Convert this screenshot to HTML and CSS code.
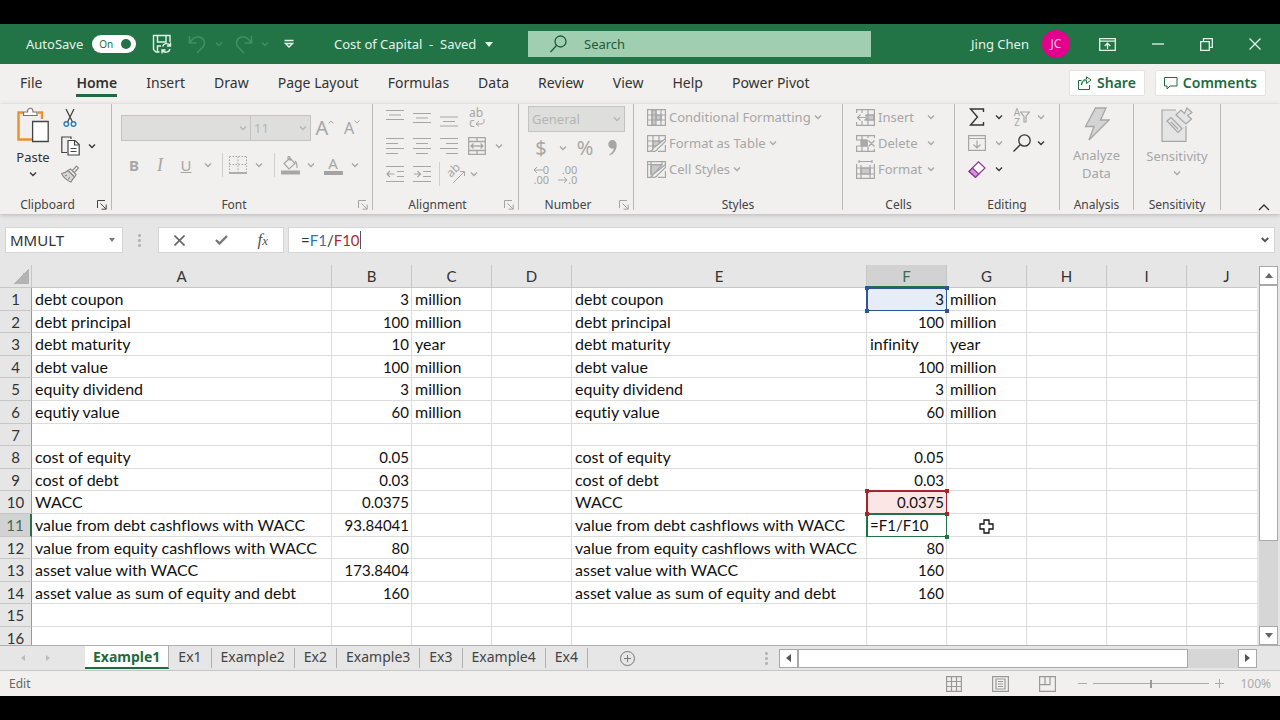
FILE: index.html
```
<!DOCTYPE html>
<html lang="en">
<head>
    <meta charset="UTF-8">
    <meta name="viewport" content="width=device-width, initial-scale=1.0">
    <title>Cost of Capital</title>
    <link rel="stylesheet" href="styles.css">
</head>
<body>
    <!-- shared icons -->
    <svg class="sprite" aria-hidden="true">
        <symbol id="chev" viewBox="0 0 8 6"><path d="M1 1.5l3 3 3-3" fill="none" stroke="currentColor" stroke-width="1.3"/></symbol>
        <symbol id="launch" viewBox="0 0 10 10"><path d="M.5 8V.5H8M3.5 3.5L9 9M9.2 4.5v4.7H4.5" fill="none" stroke="currentColor"/></symbol>
    </svg>

    <div class="app">
        <header class="titlebar">
            <label class="autosave">AutoSave
                <input type="checkbox" class="switch-input" checked>
                <span class="switch">On</span>
            </label>
            <div class="quick">
                <button class="icon-btn" aria-label="Save"><svg width="20" height="20" viewBox="0 0 20 20" fill="none" stroke="currentColor" stroke-width="1.4"><path d="M7.500 18H4L1.500 15.500V1.500H18V8M5.500 2v6H14V2M5.500 18v-6H9"/><path d="M10.500 12.500a4.200 4.200 0 0 1 7.500-1M18.500 8.500v3.500H15M18 15a4.200 4.200 0 0 1-7.500 1.500M10 19.500V16h3.500"/></svg></button>
                <button class="icon-btn faded" disabled aria-label="Undo"><svg width="18" height="20" viewBox="0 0 18 20" fill="none" stroke="currentColor" stroke-width="1.6"><path d="M1.500 2v7h7M2 8.500C5 4 9 1.500 13 3.500s5 7 1 10.500L9 19"/></svg></button>
                <button class="icon-btn faded small" disabled aria-label="Undo list"><svg width="8" height="6"><use href="#chev"/></svg></button>
                <button class="icon-btn faded" disabled aria-label="Redo"><svg width="18" height="20" viewBox="0 0 18 20" fill="none" stroke="currentColor" stroke-width="1.6"><path d="M16.500 2v7h-7M16 8.500C13 4 9 1.500 5 3.500s-5 7-1 10.500L9 19"/></svg></button>
                <button class="icon-btn faded small" disabled aria-label="Redo list"><svg width="8" height="6"><use href="#chev"/></svg></button>
                <button class="icon-btn" aria-label="Customize toolbar"><svg width="10" height="10" viewBox="0 0 10 10" fill="none" stroke="currentColor" stroke-width="1.4"><path d="M0.500 1.500h9M1.500 4.500L5 8l3.500-3.500z"/></svg></button>
            </div>
            <button class="doc-name">Cost of Capital&nbsp; - &nbsp;Saved <svg width="8" height="5" viewBox="0 0 8 5"><path d="M0 0h8L4 5z" fill="currentColor"/></svg></button>
            <div class="search">
                <svg width="17" height="18" viewBox="0 0 17 18" fill="none" stroke="currentColor" stroke-width="1.3"><circle cx="10.500" cy="6.500" r="5.500"/><path d="M6.500 10.500L.5 17"/></svg>
                <input type="search" placeholder="Search" aria-label="Search">
            </div>
            <div class="account">
                <span>Jing Chen</span>
                <span class="avatar">JC</span>
            </div>
            <div class="window-buttons">
                <button class="icon-btn" aria-label="Ribbon display options"><svg width="17" height="13" viewBox="0 0 17 13" fill="none" stroke="currentColor" stroke-width="1.300"><path d="M.7.7h15.600v11.600H.7zM.7 3.200h15.600M8.500 11V5.500M5.700 8l2.800-2.800L11.300 8"/></svg></button>
                <button class="icon-btn" aria-label="Minimize"><svg width="12" height="12" viewBox="0 0 12 12" stroke="currentColor" stroke-width="1.300"><path d="M0 6h12"/></svg></button>
                <button class="icon-btn" aria-label="Restore"><svg width="13" height="13" viewBox="0 0 13 13" fill="none" stroke="currentColor" stroke-width="1.300"><path d="M.7 3.700h8.600v8.600H.7zM3.500 3.500V.7h8.800v8.600H9.500"/></svg></button>
                <button class="icon-btn" aria-label="Close"><svg width="12" height="12" viewBox="0 0 12 12" stroke="currentColor" stroke-width="1.300"><path d="M.5.5l11 11M11.500.5l-11 11"/></svg></button>
            </div>
        </header>

        <nav class="tabs">
            <button class="tab file">File</button>
            <button class="tab active">Home</button>
            <button class="tab">Insert</button>
            <button class="tab">Draw</button>
            <button class="tab">Page Layout</button>
            <button class="tab">Formulas</button>
            <button class="tab">Data</button>
            <button class="tab">Review</button>
            <button class="tab">View</button>
            <button class="tab">Help</button>
            <button class="tab">Power Pivot</button>
            <div class="tab-actions">
                <button class="action"><svg width="14" height="14" viewBox="0 0 14 14" fill="none" stroke="currentColor"><path d="M3.500 4.500h-3v9h11V9M3.500 9c.5-3.500 2.500-4.500 5-4.500V7.500L13 4 8.500.8v2.400C5.500 3.500 3.700 5 3.500 9z"/></svg>Share</button>
                <button class="action"><svg width="14" height="14" viewBox="0 0 14 14" fill="none" stroke="currentColor"><path d="M.5 1.500h12.500v8.500H6l-3 3v-3H.5z"/></svg>Comments</button>
            </div>
        </nav>

        <section class="ribbon">
            <div class="group clipboard">
                <div class="group-body">
                    <button class="big-btn">
                        <svg width="32" height="36" viewBox="0 0 32 36" fill="none"><path d="M6 5.500H1.500v27H15M21 5.500h4V12" stroke="#e8912d" stroke-width="2.400"/><path d="M6.500 8.500V5h4c0-5 5.500-5 5.500 0h4v3.500z" fill="#fff" stroke="#777" stroke-width="1.200"/><path d="M15.600 14.500h15.600v20H15.600z" fill="#fff" stroke="#444" stroke-width="1.300"/></svg>
                        <span>Paste</span>
                        <svg width="8" height="6"><use href="#chev"/></svg>
                    </button>
                    <div class="clip-tools">
                        <button class="icon-btn" aria-label="Cut"><svg width="14" height="20" viewBox="0 0 14 20" fill="none"><path d="M3 1l6.500 13M11 1L4.500 14" stroke="#444" stroke-width="1.300"/><circle cx="3.300" cy="16" r="2.300" stroke="#2a7fc4" stroke-width="1.400"/><circle cx="10.500" cy="16" r="2.300" stroke="#2a7fc4" stroke-width="1.400"/></svg></button>
                        <span></span>
                        <button class="icon-btn" aria-label="Copy"><svg width="19" height="20" viewBox="0 0 19 20" fill="none" stroke="#444" stroke-width="1.200"><path d="M6 16.500H.8V1H10v2"/><path d="M7 4.500h7l4.200 4V19H7z" fill="#fff"/><path d="M13.500 4.500V9H18M9.500 12.500h6M9.500 15.500h6"/></svg></button>
                        <button class="icon-btn" aria-label="Copy options"><svg width="8" height="6"><use href="#chev"/></svg></button>
                        <button class="icon-btn dim" aria-label="Format painter"><svg width="18" height="18" viewBox="0 0 18 18" fill="none" stroke="#8c8c8c" stroke-width="1.200"><path d="M11 6l4.500-5 2 2L13 8M7 5.500l6.500 6.500L15 9.500 9.500 4z"/><path d="M7 5.500C5 7.500 3 8 .5 8.500c2 4 5 7 9.500 8.500 1-2 2-3.500 3.500-5z" fill="#d8d8d8"/><path d="M4 11l2-1M7 14.500l2-2.500"/></svg></button>
                    </div>
                </div>
                <div class="group-label">Clipboard<svg class="launch dark" width="10" height="10"><use href="#launch"/></svg></div>
            </div>

            <div class="group font dim">
                <div class="group-body">
                    <div class="font-row">
                        <div class="combo name"><select disabled aria-label="Font"><option></option></select><svg width="8" height="6"><use href="#chev"/></svg></div>
                        <div class="combo size"><select disabled aria-label="Font size"><option>11</option></select><svg width="8" height="6"><use href="#chev"/></svg></div>
                        <button class="icon-btn letter grow" disabled aria-label="Increase font size">A<svg width="6" height="4" viewBox="0 0 6 4" fill="none" stroke="currentColor"><path d="M.5 3.500L3 1l2.500 2.500"/></svg></button>
                        <button class="icon-btn letter shrink" disabled aria-label="Decrease font size">A<svg width="6" height="4" viewBox="0 0 6 4" fill="none" stroke="currentColor"><path d="M.5.5L3 3 5.500.5"/></svg></button>
                    </div>
                    <div class="font-grid">
                        <button class="icon-btn glyph" disabled><b>B</b></button>
                        <button class="icon-btn glyph serif" disabled><i>I</i></button>
                        <button class="icon-btn glyph" disabled><u>U</u></button>
                        <button class="icon-btn" disabled aria-label="Underline options"><svg width="8" height="6"><use href="#chev"/></svg></button>
                        <span class="divider"></span>
                        <button class="icon-btn" disabled aria-label="Borders"><svg width="18" height="18" viewBox="0 0 18 18" fill="none" stroke="currentColor"><path d="M.5.5h17M.5.5V16M17.500.5V16M9 .5V16M.5 8.500h17" stroke-dasharray="1.500 1.500"/><path d="M0 17h18" stroke-width="1.800"/></svg></button>
                        <button class="icon-btn" disabled aria-label="Border options"><svg width="8" height="6"><use href="#chev"/></svg></button>
                        <span class="divider"></span>
                        <button class="icon-btn" disabled aria-label="Fill color"><svg width="19" height="19" viewBox="0 0 19 19" fill="none" stroke="currentColor" stroke-width="1.200"><path d="M3 7.500L9 2l5 5.500-6 5.500zM9 5V1.500C9 0 7 0 7 1.500v3M14 5c2 1.500 2 4 2 7"/><path d="M0 16.500h19" stroke-width="4"/></svg></button>
                        <button class="icon-btn" disabled aria-label="Fill options"><svg width="8" height="6"><use href="#chev"/></svg></button>
                        <button class="icon-btn font-color" disabled>A</button>
                        <button class="icon-btn" disabled aria-label="Font color options"><svg width="8" height="6"><use href="#chev"/></svg></button>
                    </div>
                </div>
                <div class="group-label">Font<svg class="launch" width="10" height="10"><use href="#launch"/></svg></div>
            </div>

            <div class="group alignment dim">
                <div class="group-body align-grid">
                    <button class="icon-btn" disabled aria-label="Top align"><svg width="18" height="18" viewBox="0 0 18 18" stroke="currentColor" stroke-width="1.200"><path d="M0 1.500h18M3 6h12M0 10.500h18"/></svg></button>
                    <button class="icon-btn" disabled aria-label="Middle align"><svg width="18" height="18" viewBox="0 0 18 18" stroke="currentColor" stroke-width="1.200"><path d="M0 4.500h18M3 9h12M0 13.500h18"/></svg></button>
                    <button class="icon-btn" disabled aria-label="Bottom align"><svg width="18" height="18" viewBox="0 0 18 18" stroke="currentColor" stroke-width="1.200"><path d="M0 8h18M3 12.500h12M0 17h18"/></svg></button>
                    <button class="icon-btn wrap" disabled>ab<br>c<svg width="10" height="8" viewBox="0 0 10 8" fill="none" stroke="currentColor"><path d="M9 0v2.500C9 4 8 5 6 5H1M4 2L1 5l3 2.500"/></svg></button>
                    <span></span>
                    <button class="icon-btn" disabled aria-label="Align left"><svg width="18" height="18" viewBox="0 0 18 18" stroke="currentColor" stroke-width="1.200"><path d="M0 1.500h18M0 6.500h12M0 11.500h18M0 16.500h12"/></svg></button>
                    <button class="icon-btn" disabled aria-label="Center"><svg width="18" height="18" viewBox="0 0 18 18" stroke="currentColor" stroke-width="1.200"><path d="M0 1.500h18M3 6.500h12M0 11.500h18M3 16.500h12"/></svg></button>
                    <button class="icon-btn" disabled aria-label="Align right"><svg width="18" height="18" viewBox="0 0 18 18" stroke="currentColor" stroke-width="1.200"><path d="M0 1.500h18M6 6.500h12M0 11.500h18M6 16.500h12"/></svg></button>
                    <button class="icon-btn" disabled aria-label="Merge and center"><svg width="18" height="18" viewBox="0 0 18 18" fill="none" stroke="currentColor" stroke-width="1.300"><path d="M.7.7h16.600v16.600H.7zM.7 4.500h16.600M.7 13.500h16.600M9 .7v3.800M9 13.500v3.800M3 9h12M5.500 6.500L3 9l2.500 2.500M12.500 6.500L15 9l-2.500 2.500"/></svg></button>
                    <button class="icon-btn" disabled aria-label="Merge options"><svg width="8" height="6"><use href="#chev"/></svg></button>
                    <button class="icon-btn" disabled aria-label="Decrease indent"><svg width="18" height="18" viewBox="0 0 18 18" fill="none" stroke="currentColor" stroke-width="1.200"><path d="M0 1.500h18M11 6.500h7M11 11.500h7M0 16.500h18M1 9h7.500M4 6L1 9l3 3"/></svg></button>
                    <button class="icon-btn" disabled aria-label="Increase indent"><svg width="18" height="18" viewBox="0 0 18 18" fill="none" stroke="currentColor" stroke-width="1.200"><path d="M0 1.500h18M10 6.500h8M10 11.500h8M0 16.500h18M1 9h6.500M4.500 6l3 3-3 3"/></svg></button>
                    <div class="orient">
                        <span class="divider"></span>
                        <button class="icon-btn" disabled aria-label="Orientation"><svg class="angled" width="20" height="20" viewBox="0 0 20 20" fill="none" stroke="currentColor"><text transform="translate(6 14) rotate(-45)" font-size="12" fill="currentColor" stroke="none">ab</text><path d="M8 19L19 8M15 7.500h4.500V12"/></svg></button>
                        <button class="icon-btn" disabled aria-label="Orientation options"><svg width="8" height="6"><use href="#chev"/></svg></button>
                    </div>
                </div>
                <div class="group-label">Alignment<svg class="launch" width="10" height="10"><use href="#launch"/></svg></div>
            </div>

            <div class="group number dim">
                <div class="group-body">
                    <div class="combo format"><select disabled aria-label="Number format"><option>General</option></select><svg width="8" height="6"><use href="#chev"/></svg></div>
                    <div class="number-grid">
                        <button class="icon-btn symbol" disabled>$</button>
                        <button class="icon-btn" disabled aria-label="Currency options"><svg width="8" height="6"><use href="#chev"/></svg></button>
                        <button class="icon-btn symbol" disabled>%</button>
                        <button class="icon-btn" disabled aria-label="Comma style"><svg width="9" height="16" viewBox="0 0 9 16" fill="currentColor"><path d="M4.300 0C7 0 8.700 2 8.700 5c0 5-3 9-7 10.500l-.5-1C4 13 5.500 11 5.700 8.300 2.500 9.500.3 7 .3 4.200.3 2 2 0 4.300 0z"/></svg></button>
                        <button class="icon-btn decimals" disabled><span><svg width="10" height="8" viewBox="0 0 10 8" fill="none" stroke="currentColor"><path d="M10 4H1M4 1L1 4l3 3"/></svg>0</span><span>.00</span></button>
                        <button class="icon-btn decimals" disabled><span>.00</span><span><svg width="10" height="8" viewBox="0 0 10 8" fill="none" stroke="currentColor"><path d="M0 4h9M6 1l3 3-3 3"/></svg>.0</span></button>
                    </div>
                </div>
                <div class="group-label">Number<svg class="launch" width="10" height="10"><use href="#launch"/></svg></div>
            </div>

            <div class="group styles dim">
                <div class="group-body rows">
                    <button class="row-btn" disabled><svg width="19" height="17" viewBox="0 0 19 17" fill="none" stroke="currentColor" stroke-width="1.200"><path d="M5 1h4v15H5zM9 6h5v5H9z" fill="#c9c9c9"/><path d="M.6.6h17.800v15.800H.6zM.6 6h17.800M.6 11h17.800M5 .6v15.800M14 .6v15.800M9 .6v10"/></svg>Conditional Formatting<svg width="8" height="6"><use href="#chev"/></svg></button>
                    <button class="row-btn" disabled><svg width="19" height="17" viewBox="0 0 19 17" fill="none" stroke="currentColor" stroke-width="1.200"><path d="M6 6h9l-8 9H6z" fill="#c9c9c9"/><path d="M18.400 4V.6H.6v15.800h4M.6 6h14M.6 11h9M6 .6v13M12 .6V9M18.400 10v6.400H11"/><path d="M18 4L8 12c-2 .5-2 3-4 4 3 1 6 0 6.500-2L19 6z" fill="#f1f0ef"/></svg>Format as Table<svg width="8" height="6"><use href="#chev"/></svg></button>
                    <button class="row-btn" disabled><svg width="19" height="17" viewBox="0 0 19 17" fill="none" stroke="currentColor" stroke-width="1.200"><path d="M4 4h11l-9 10H4z" fill="#c9c9c9"/><path d="M18.400 4V.6H.6v15.800h4M.6 3.500h15M4 .6v13M18.400 10v6.400H11M15 .6v3"/><path d="M18 4L8 12c-2 .5-2 3-4 4 3 1 6 0 6.500-2L19 6z" fill="#f1f0ef"/></svg>Cell Styles<svg width="8" height="6"><use href="#chev"/></svg></button>
                </div>
                <div class="group-label">Styles</div>
            </div>

            <div class="group cells dim">
                <div class="group-body rows">
                    <button class="row-btn" disabled><svg width="19" height="17" viewBox="0 0 19 17" fill="none" stroke="currentColor" stroke-width="1.200"><path d="M10 6h8v5h-8z" fill="#c9c9c9"/><path d="M.6 4V.6h17.800v15.800H.6V13M10 6h8.400M8 11h10.400M6 .6V4M12 .6v15.800M6 12v4M1.500 8.500H9M4.500 5.500l-3 3 3 3"/></svg><span>Insert</span><svg width="8" height="6"><use href="#chev"/></svg></button>
                    <button class="row-btn" disabled><svg width="19" height="17" viewBox="0 0 19 17" fill="none" stroke="currentColor" stroke-width="1.200"><path d="M5 5h6v6H5z" fill="#aaa"/><path d="M18.400 3V.6H.6V5h10M.6 11v5.400h17.800V14M.6 11H11V5M6 .6V5M12 .6V3M6 11v5M12 12v4M12.500 5.500l6 6M18.500 5.500l-6 6"/></svg><span>Delete</span><svg width="8" height="6"><use href="#chev"/></svg></button>
                    <button class="row-btn" disabled><svg width="19" height="19" viewBox="0 0 19 19" fill="none" stroke="currentColor" stroke-width="1.200"><path d="M5 8h9v6H5z" fill="#c9c9c9"/><path d="M3 1.500h13M3 0v3M16 0v3M.6 4v14.400h17.800V4M.6 8h17.800M.6 14h17.800M5 5v13M14 5v13"/></svg><span>Format</span><svg width="8" height="6"><use href="#chev"/></svg></button>
                </div>
                <div class="group-label">Cells</div>
            </div>

            <div class="group editing">
                <div class="group-body edit-grid">
                    <button class="icon-btn" aria-label="AutoSum"><svg width="16" height="18" viewBox="0 0 16 18" fill="none" stroke="currentColor" stroke-width="1.400"><path d="M14.500 4V1H1.500l7 8-7 8h13v-3"/></svg></button>
                    <button class="icon-btn" aria-label="AutoSum options"><svg width="8" height="6"><use href="#chev"/></svg></button>
                    <button class="icon-btn dim sort" disabled><span>A<br>Z</span><svg width="10" height="12" viewBox="0 0 10 12" fill="none" stroke="currentColor" stroke-width="1.200"><path d="M.6 1h8.800L6 5.500V11H4V5.500z"/></svg></button>
                    <button class="icon-btn dim" disabled aria-label="Sort options"><svg width="8" height="6"><use href="#chev"/></svg></button>
                    <button class="icon-btn dim" disabled aria-label="Fill"><svg width="18" height="16" viewBox="0 0 18 16" fill="none" stroke="currentColor" stroke-width="1.200"><path d="M.6.6h16.800v14.800H.6zM.6 3.500h16.800M9 5.500V13M5.500 9.500L9 13l3.500-3.500"/></svg></button>
                    <button class="icon-btn dim" disabled aria-label="Fill options"><svg width="8" height="6"><use href="#chev"/></svg></button>
                    <button class="icon-btn" aria-label="Find"><svg width="18" height="18" viewBox="0 0 18 18" fill="none" stroke="currentColor" stroke-width="1.300"><circle cx="11.500" cy="6.500" r="5.700"/><path d="M7.500 10.500L.5 17.500"/></svg></button>
                    <button class="icon-btn" aria-label="Find options"><svg width="8" height="6"><use href="#chev"/></svg></button>
                    <button class="icon-btn" aria-label="Clear"><svg width="18" height="17" viewBox="0 0 18 17" stroke="#8a3a96" stroke-width="1.200"><path d="M1 10.500L10.500.8 17 7 7.500 16.300z" fill="#fff"/><path d="M1 10.500L4.500 7l6.300 6-3.300 3.300z" fill="#d591dd"/></svg></button>
                    <button class="icon-btn" aria-label="Clear options"><svg width="8" height="6"><use href="#chev"/></svg></button>
                </div>
                <div class="group-label">Editing</div>
            </div>

            <div class="group analysis dim">
                <div class="group-body">
                    <button class="big-btn" disabled>
                        <svg width="26" height="34" viewBox="0 0 26 34" fill="#d4d4d4" stroke="currentColor" stroke-width="1.300"><path d="M11.500 1H22l-5.500 12H25L5 33l5-13.500H1.500z"/></svg>
                        <span>Analyze<br>Data</span>
                    </button>
                </div>
                <div class="group-label">Analysis</div>
            </div>

            <div class="group sensitivity dim">
                <div class="group-body">
                    <button class="big-btn" disabled>
                        <svg width="32" height="35" viewBox="0 0 32 35" fill="#e4e4e4" stroke="currentColor" stroke-width="1.200"><path d="M15 3H1v31.400h24V19"/><path d="M6 14l4-3.500 11 11-4 4zM10 15l7 7"/><path d="M15 8l5-5 3.500 3.500L26 1l5 4.500-4.500 3 4 3.500-5.500 5z"/></svg>
                        <span>Sensitivity</span>
                        <svg width="8" height="6"><use href="#chev"/></svg>
                    </button>
                </div>
                <div class="group-label">Sensitivity</div>
            </div>

            <button class="icon-btn collapse" aria-label="Collapse ribbon"><svg width="12" height="8" viewBox="0 0 12 8" fill="none" stroke="currentColor" stroke-width="1.300"><path d="M1 7l5-5 5 5"/></svg></button>
        </section>

        <section class="formula-bar">
            <div class="name-box">
                <input type="text" value="MMULT" aria-label="Name box">
                <button class="icon-btn" aria-label="Names"><svg width="6" height="4" viewBox="0 0 6 4"><path d="M0 0h6L3 4z" fill="#777"/></svg></button>
            </div>
            <span class="dots"></span>
            <div class="formula-tools">
                <button class="icon-btn" aria-label="Cancel"><svg width="11" height="11" viewBox="0 0 11 11" stroke="#666" stroke-width="1.600"><path d="M.5.5l10 10M10.500.5l-10 10"/></svg></button>
                <button class="icon-btn" aria-label="Enter"><svg width="13" height="10" viewBox="0 0 13 10" fill="none" stroke="#777" stroke-width="2.400"><path d="M1 5l3.500 3.500L12 1"/></svg></button>
                <button class="icon-btn fx" aria-label="Insert function"><i>f<small>x</small></i></button>
            </div>
            <div class="formula">
                <div class="formula-text" contenteditable="true" role="textbox" aria-label="Formula">=<span class="ref-blue">F1</span>/<span class="ref-red">F10</span></div>
                <button class="icon-btn" aria-label="Expand formula bar"><svg width="8" height="6" viewBox="0 0 8 6" fill="none" stroke="#555" stroke-width="2"><path d="M.8 1L4 4.200 7.200 1"/></svg></button>
            </div>
        </section>

        <main class="sheet">
            <div class="grid">
                <table>
                    <colgroup>
                        <col class="c-head"><col class="c-a"><col><col><col><col class="c-e"><col><col><col><col><col>
                    </colgroup>
                    <thead>
                        <tr><th class="corner"></th><th>A</th><th>B</th><th>C</th><th>D</th><th>E</th><th class="current">F</th><th>G</th><th>H</th><th>I</th><th>J</th></tr>
                    </thead>
                    <tbody>
                        <tr><th>1</th><td>debt coupon</td><td class="n">3</td><td>million</td><td></td><td>debt coupon</td><td class="n ref blue">3</td><td>million</td><td></td><td></td><td></td></tr>
                        <tr><th>2</th><td>debt principal</td><td class="n">100</td><td>million</td><td></td><td>debt principal</td><td class="n">100</td><td>million</td><td></td><td></td><td></td></tr>
                        <tr><th>3</th><td>debt maturity</td><td class="n">10</td><td>year</td><td></td><td>debt maturity</td><td>infinity</td><td>year</td><td></td><td></td><td></td></tr>
                        <tr><th>4</th><td>debt value</td><td class="n">100</td><td>million</td><td></td><td>debt value</td><td class="n">100</td><td>million</td><td></td><td></td><td></td></tr>
                        <tr><th>5</th><td>equity dividend</td><td class="n">3</td><td>million</td><td></td><td>equity dividend</td><td class="n">3</td><td>million</td><td></td><td></td><td></td></tr>
                        <tr><th>6</th><td>equtiy value</td><td class="n">60</td><td>million</td><td></td><td>equtiy value</td><td class="n">60</td><td>million</td><td></td><td></td><td></td></tr>
                        <tr><th>7</th><td></td><td></td><td></td><td></td><td></td><td></td><td></td><td></td><td></td><td></td></tr>
                        <tr><th>8</th><td>cost of equity</td><td class="n">0.05</td><td></td><td></td><td>cost of equity</td><td class="n">0.05</td><td></td><td></td><td></td><td></td></tr>
                        <tr><th>9</th><td>cost of debt</td><td class="n">0.03</td><td></td><td></td><td>cost of debt</td><td class="n">0.03</td><td></td><td></td><td></td><td></td></tr>
                        <tr><th>10</th><td>WACC</td><td class="n">0.0375</td><td></td><td></td><td>WACC</td><td class="n ref red">0.0375</td><td></td><td></td><td></td><td></td></tr>
                        <tr><th class="current">11</th><td>value from debt cashflows with WACC</td><td class="n">93.84041</td><td></td><td></td><td>value from debt cashflows with WACC</td><td class="ref editing-cell">=F1/F10</td><td class="pointer"><svg width="15" height="15" viewBox="0 0 15 15" fill="#fff" stroke="#111" stroke-width="1.300"><path d="M5 1h5v4h4v5h-4v4H5v-4H1V5h4z"/></svg></td><td></td><td></td><td></td></tr>
                        <tr><th>12</th><td>value from equity cashflows with WACC</td><td class="n">80</td><td></td><td></td><td>value from equity cashflows with WACC</td><td class="n">80</td><td></td><td></td><td></td><td></td></tr>
                        <tr><th>13</th><td>asset value with WACC</td><td class="n">173.8404</td><td></td><td></td><td>asset value with WACC</td><td class="n">160</td><td></td><td></td><td></td><td></td></tr>
                        <tr><th>14</th><td>asset value as sum of equity and debt</td><td class="n">160</td><td></td><td></td><td>asset value as sum of equity and debt</td><td class="n">160</td><td></td><td></td><td></td><td></td></tr>
                        <tr><th>15</th><td></td><td></td><td></td><td></td><td></td><td></td><td></td><td></td><td></td><td></td></tr>
                        <tr><th>16</th><td></td><td></td><td></td><td></td><td></td><td></td><td></td><td></td><td></td><td></td></tr>
                    </tbody>
                </table>
            </div>
            <div class="vscroll">
                <button class="scroll-btn" aria-label="Scroll up"><svg width="8" height="5" viewBox="0 0 8 5"><path d="M0 5h8L4 0z" fill="#666"/></svg></button>
                <div class="thumb"></div>
                <div class="track"></div>
                <button class="scroll-btn" aria-label="Scroll down"><svg width="8" height="5" viewBox="0 0 8 5"><path d="M0 0h8L4 5z" fill="#666"/></svg></button>
            </div>
        </main>

        <div class="sheet-tabs">
            <div class="tab-nav">
                <button class="icon-btn" disabled aria-label="Previous sheet"><svg width="4" height="6" viewBox="0 0 4 6"><path d="M4 0v6L0 3z" fill="#bbb"/></svg></button>
                <button class="icon-btn" disabled aria-label="Next sheet"><svg width="4" height="6" viewBox="0 0 4 6"><path d="M0 0v6l4-3z" fill="#bbb"/></svg></button>
            </div>
            <button class="sheet-tab active">Example1</button>
            <button class="sheet-tab">Ex1</button>
            <button class="sheet-tab">Example2</button>
            <button class="sheet-tab">Ex2</button>
            <button class="sheet-tab">Example3</button>
            <button class="sheet-tab">Ex3</button>
            <button class="sheet-tab">Example4</button>
            <button class="sheet-tab">Ex4</button>
            <button class="icon-btn add" aria-label="New sheet"><svg width="15" height="15" viewBox="0 0 15 15" fill="none" stroke="#777"><circle cx="7.500" cy="7.500" r="7"/><path d="M7.500 4v7M4 7.500h7"/></svg></button>
            <span class="dots"></span>
            <div class="hscroll">
                <button class="scroll-btn" aria-label="Scroll left"><svg width="5" height="8" viewBox="0 0 5 8"><path d="M5 0v8L0 4z" fill="#555"/></svg></button>
                <div class="thumb"></div>
                <div class="track"></div>
                <button class="scroll-btn" aria-label="Scroll right"><svg width="5" height="8" viewBox="0 0 5 8"><path d="M0 0v8l5-4z" fill="#555"/></svg></button>
            </div>
        </div>

        <footer class="status">
            <span>Edit</span>
            <div class="views">
                <button class="icon-btn" aria-label="Normal view"><svg width="16" height="16" viewBox="0 0 16 16" fill="none" stroke="currentColor" stroke-width="1.200"><path d="M.6.6h14.800v14.800H.6zM.6 5.500h14.800M.6 10.500h14.800M5.500.6v14.800M10.500.6v14.800"/></svg></button>
                <button class="icon-btn" aria-label="Page layout view"><svg width="17" height="16" viewBox="0 0 17 16" fill="none" stroke="currentColor" stroke-width="1.200"><path d="M.6.6h15.800v14.800H.6zM4 3h9v10H4zM6 5.500h5M6 8h5M6 10.500h5"/></svg></button>
                <button class="icon-btn" aria-label="Page break view"><svg width="17" height="16" viewBox="0 0 17 16" fill="none" stroke="currentColor" stroke-width="1.200"><path d="M.6.6h15.800v14.800H.6zM6 .6v8h5v-8M.6 8.600H6"/></svg></button>
            </div>
            <div class="zoom">
                <button class="icon-btn" aria-label="Zoom out"><svg width="9" height="9" viewBox="0 0 9 9" stroke="currentColor"><path d="M0 4.500h9"/></svg></button>
                <input type="range" min="10" max="190" value="100" aria-label="Zoom">
                <button class="icon-btn" aria-label="Zoom in"><svg width="9" height="9" viewBox="0 0 9 9" stroke="currentColor"><path d="M0 4.500h9M4.500 0v9"/></svg></button>
                <span>100%</span>
            </div>
        </footer>
    </div>
</body>
</html>
```
FILE: styles.css
```
* {
    box-sizing: border-box;
}

body {
    margin: 0;
    padding: 24px 0;
    height: 100vh;
    background: #000;
    font-family: "Noto Sans", "Open Sans", sans-serif;
    font-size: 13px;
    color: #333;
}

button, input, select {
    font: inherit;
    color: inherit;
    margin: 0;
    padding: 0;
    border: none;
    background: none;
    outline: none;
}

svg {
    flex: none;
}

.sprite {
    position: absolute;
    width: 0;
    height: 0;
}

.app {
    display: flex;
    flex-direction: column;
    height: 100%;
    background: #f1f0ef;
    overflow: hidden;
}

.icon-btn {
    display: flex;
    align-items: center;
    justify-content: center;
}

.dim {
    color: #a6a6a6;
}

/* Title bar */
.titlebar {
    display: flex;
    align-items: center;
    height: 40px;
    flex: none;
    padding: 0 19px 0 26px;
    background: #227447;
    color: #e4f3e9;
}

.autosave {
    display: flex;
    align-items: center;
    gap: 9px;
    width: 110px;
}

.switch-input {
    position: absolute;
    opacity: 0;
}

.switch {
    display: flex;
    align-items: center;
    justify-content: space-between;
    width: 44px;
    height: 18px;
    padding: 0 5px 0 7px;
    border-radius: 9px;
    background: #fff;
    color: #227447;
    font-size: 10px;
}

.switch::after {
    content: "";
    width: 10px;
    height: 10px;
    border-radius: 50%;
    background: #227447;
}

.quick {
    display: grid;
    grid-template-columns: 36px 34px 10px 40px 2px 46px;
    justify-items: center;
    align-items: center;
    margin-left: 8px;
}

.faded {
    color: #3f9064;
}

.doc-name {
    display: flex;
    align-items: center;
    gap: 9px;
    width: 168px;
    margin-left: 22px;
    white-space: nowrap;
}

.search {
    display: flex;
    align-items: center;
    gap: 17px;
    flex: 1;
    height: 26px;
    margin: 0 100px 0 26px;
    padding-left: 22px;
    background: #9fcfb0;
    color: #1e5c39;
}

.search input {
    flex: 1;
    min-width: 0;
}

.search input::placeholder {
    color: #1e5c39;
    opacity: 1;
}

.account {
    display: flex;
    align-items: center;
    gap: 13px;
    white-space: nowrap;
}

.avatar {
    width: 28px;
    height: 28px;
    border-radius: 50%;
    background: #e3008c;
    color: #f7c6e4;
    font-size: 12px;
    line-height: 28px;
    text-align: center;
}

.window-buttons {
    display: grid;
    grid-template-columns: 17px 12px 13px 12px;
    gap: 36px;
    margin-left: 29px;
}

/* Ribbon tabs */
.tabs {
    display: flex;
    align-items: center;
    gap: 29px;
    height: 40px;
    flex: none;
    padding: 0 14px 3px 20px;
    font-size: 14px;
}

.tab {
    height: 28px;
    border-bottom: 3px solid transparent;
    border-top: 3px solid transparent;
    line-height: 20px;
    white-space: nowrap;
}

.tab.file {
    margin-right: 5px;
}

.tab.active {
    font-weight: 600;
    border-bottom-color: #1e6b41;
}

.tab-actions {
    display: flex;
    gap: 10px;
    margin-left: auto;
}

.action {
    display: flex;
    align-items: center;
    gap: 5px;
    height: 26px;
    padding: 0 8px;
    background: #fff;
    border: 1px solid #e3e2e1;
    border-radius: 2px;
    color: #1e6b41;
    font-weight: 600;
}

/* Ribbon */
.ribbon {
    display: flex;
    height: 110px;
    flex: none;
    position: relative;
    z-index: 1;
    box-shadow: 0 1px 4px #b5b5b5;
    background: #f1f0ef;
}

.group {
    display: flex;
    flex-direction: column;
    height: 106px;
    border-right: 1px solid #b9b9b9;
}

.group-body {
    flex: 1;
}

.group-label {
    position: relative;
    height: 10px;
    line-height: 10px;
    padding-right: 16px;
    font-size: 12px;
    text-align: center;
    color: #444;
}

.styles .group-label,
.cells .group-label,
.editing .group-label,
.analysis .group-label,
.sensitivity .group-label {
    padding-right: 0;
}

.launch {
    position: absolute;
    right: 4px;
    top: 0;
    color: #a3a3a3;
}

.launch.dark {
    color: #444;
}

.clipboard { width: 112px; }
.font { width: 261px; }
.alignment { width: 146px; }
.number { width: 115px; }
.styles { width: 209px; }
.cells { width: 112px; }
.editing { width: 105px; }
.analysis { width: 74px; }
.sensitivity { width: 87px; }

.clipboard .group-body {
    display: flex;
    gap: 6px;
    padding-left: 12px;
}

.big-btn {
    display: flex;
    flex-direction: column;
    align-items: center;
    gap: 5px;
    width: 100%;
    padding-top: 3px;
    line-height: 18px;
}

.clipboard .big-btn {
    width: 42px;
}

.clip-tools {
    display: grid;
    grid-template-columns: 20px 24px;
    grid-template-rows: repeat(3, 28px);
}

.combo {
    position: relative;
    display: flex;
    align-items: center;
    height: 26px;
    border: 1px solid #c3c3c3;
    background: #dededd;
    color: #b5b5b5;
}

.combo select {
    appearance: none;
    flex: 1;
    min-width: 0;
    padding: 0 3px;
    opacity: 1;
}

.combo svg {
    margin-right: 3px;
}

.font-row {
    display: flex;
    align-items: center;
    padding: 11px 0 0 9px;
}

.combo.name { width: 130px; }

.combo.size {
    width: 60px;
    border-left: none;
}

.letter {
    align-items: flex-start;
    line-height: 22px;
}

.letter svg {
    margin-top: 3px;
}

.grow {
    width: 28px;
    font-size: 20px;
}

.shrink {
    width: 26px;
    font-size: 16px;
}

.font-grid {
    display: grid;
    grid-template-columns: 26px 26px 26px 18px 10px 22px 20px 10px 22px 20px 24px 20px;
    grid-template-rows: 26px;
    justify-items: center;
    align-items: center;
    padding: 11px 0 0 9px;
}

.glyph {
    font-size: 15px;
}

.serif {
    font-family: "Liberation Serif", serif;
    font-size: 18px;
}

.font-color {
    height: 19px;
    width: 19px;
    border-bottom: 4px solid #a3a3a3;
    font-size: 15px;
    line-height: 15px;
}

.divider {
    width: 1px;
    height: 24px;
    background: #cfcfcf;
}

.align-grid {
    display: grid;
    grid-template-columns: repeat(3, 27px) 30px 14px;
    grid-template-rows: repeat(3, 28px);
    justify-items: center;
    align-items: center;
    padding-left: 8px;
}

.wrap {
    display: block;
    font-size: 12px;
    line-height: 10px;
    text-align: left;
}

.orient {
    grid-column: span 3;
    justify-self: start;
    display: flex;
    align-items: center;
    gap: 5px;
    padding-left: 4px;
}

.angled {
    overflow: visible;
}

.combo.format {
    width: 97px;
    margin: 2px 0 2px 9px;
}

.number-grid {
    display: grid;
    grid-template-columns: 26px 18px 26px 28px;
    grid-template-rows: repeat(2, 27px);
    justify-items: center;
    align-items: center;
    padding-left: 9px;
}

.symbol {
    font-size: 20px;
    line-height: 20px;
}

.decimals {
    flex-direction: column;
    align-items: flex-end;
    font-size: 11px;
    line-height: 10px;
}

.decimals:last-child {
    grid-column: span 2;
    justify-self: start;
    padding-left: 4px;
}

.rows {
    display: flex;
    flex-direction: column;
    padding-left: 13px;
}

.row-btn {
    display: flex;
    align-items: center;
    gap: 3px;
    height: 26px;
    white-space: nowrap;
}

.cells .row-btn span {
    min-width: 46px;
    text-align: left;
}

.edit-grid {
    display: grid;
    grid-template-columns: 26px 18px 28px 10px;
    grid-template-rows: repeat(3, 26px);
    justify-items: center;
    align-items: center;
    padding-left: 9px;
}

.sort {
    font-size: 10px;
    line-height: 10px;
}

.collapse {
    margin: auto 10px 3px auto;
}

/* Formula bar */
.formula-bar {
    display: flex;
    align-items: center;
    height: 51px;
    flex: none;
    padding: 1px 5px 0;
    background: #e6e6e6;
    font-size: 15px;
}

.name-box,
.formula-tools,
.formula {
    display: flex;
    align-items: center;
    height: 26px;
    background: #fff;
    border: 1px solid #d6d6d6;
}

.name-box {
    width: 118px;
    padding: 0 7px 0 4px;
}

.name-box input {
    flex: 1;
    min-width: 0;
}

.dots {
    width: 3px;
    height: 14px;
    margin: 0 17px 0 15px;
    background: radial-gradient(circle, #b3b3b3 1px, transparent 2px) 0 0 / 3px 5px;
}

.formula-tools {
    width: 126px;
    margin-right: 4px;
    justify-content: space-around;
}

.fx {
    font-family: "Liberation Serif", serif;
    font-size: 17px;
    color: #555;
}

.fx small {
    font-size: 13px;
}

.formula {
    flex: 1;
    padding: 0 5px 0 12px;
}

.formula-text {
    flex: 1;
    outline: none;
    font-family: Lato, sans-serif;
}

.ref-blue { color: #2f75b5; }

.ref-red {
    color: #b0272f;
    border-right: 1px solid #555;
}

/* Sheet */
.sheet {
    display: flex;
    flex: 1;
    min-height: 0;
    background: #e6e6e6;
}

.grid {
    flex: 1;
    min-width: 0;
    overflow: hidden;
}

table {
    width: 1267px;
    table-layout: fixed;
    border-collapse: separate;
    border-spacing: 0;
    font-family: Lato, sans-serif;
    font-size: 16px;
    font-variant-ligatures: none;
    color: #111;
}

col { width: 80px; }
.c-head { width: 32px; }
.c-a { width: 300px; }
.c-e { width: 295px; }

thead th {
    height: 23px;
}

th {
    padding: 0;
    background: #e6e6e6;
    border-right: 1px solid #c6c6c6;
    border-bottom: 1px solid #c6c6c6;
    font-size: 15px;
    font-weight: 400;
    text-align: center;
    line-height: 20px;
    color: #333;
}

tbody th {
    border-right-color: #999;
}

th.current {
    background: #d2d2d2;
    color: #3f6b52;
}

thead th.current {
    border-bottom: 2px solid #217346;
}

tbody th.current {
    border-right: 2px solid #217346;
}

.corner {
    background: linear-gradient(135deg, transparent 50%, #b3b3b3 50%) 13px 3px / 16px 16px no-repeat #e6e6e6;
}

/* rows alternate 23/22px */
tbody tr { height: 23px; }
tbody tr:nth-child(5n + 2),
tbody tr:nth-child(5n + 4) { height: 22px; }

td {
    position: relative;
    padding: 0 3px;
    background: #fff;
    border-right: 1px solid #dcdcdc;
    border-bottom: 1px solid #dcdcdc;
    line-height: 20px;
    white-space: nowrap;
}

.n {
    padding: 0 2px;
    font-size: 15px;
    text-align: right;
}

/* outline drawn over the cell borders */
.ref::after {
    content: "";
    position: absolute;
    inset: -1px -2px -2px -1px;
    border: 2px solid #2b5797;
}

/* corner handles */
.ref::before {
    content: "";
    position: absolute;
    z-index: 1;
    inset: -2px -3px -3px -2px;
    --dot: linear-gradient(#2b5797, #2b5797);
    background:
        var(--dot) left top / 4px 4px no-repeat,
        var(--dot) right top / 4px 4px no-repeat,
        var(--dot) left bottom / 4px 4px no-repeat,
        var(--dot) right bottom / 4px 4px no-repeat;
}

.blue { background: #e6edf8; }

.red { background: #fbe5e5; }

.red::before {
    --dot: linear-gradient(#a3262e, #a3262e);
}

.red::after {
    border-color: #a3262e;
}

.editing-cell {
    font-size: 15px;
}

.editing-cell::before {
    background: linear-gradient(#217346, #217346) right bottom / 4px 4px no-repeat;
}

.editing-cell::after {
    border-color: #217346;
}

.pointer svg {
    display: block;
    margin: 2px auto 0;
}

.vscroll,
.hscroll {
    display: flex;
    background: #d6d6d6;
}

.vscroll {
    flex-direction: column;
    width: 19px;
    margin: 1px 2px 0 2px;
}

.scroll-btn {
    display: flex;
    align-items: center;
    justify-content: center;
    width: 19px;
    height: 19px;
    flex: none;
    background: #fff;
    border: 1px solid #a8a8a8;
}

.thumb {
    background: #fff;
    border: 1px solid #a8a8a8;
}

.vscroll .thumb { flex: 257; }
.vscroll .track { flex: 86; }
.hscroll .thumb { flex: 391; }
.hscroll .track { flex: 50; }

/* Sheet tabs */
.sheet-tabs {
    display: flex;
    align-items: center;
    height: 26px;
    flex: none;
    padding-right: 23px;
    background: #e6e6e6;
    border-top: 1px solid #b0b0b0;
    border-bottom: 1px solid #c6c6c6;
    font-size: 14px;
}

.tab-nav {
    display: flex;
    gap: 21px;
    width: 85px;
    padding-left: 21px;
}

.sheet-tab {
    height: 20px;
    padding: 0 9px 2px;
    border-right: 1px solid #b0b0b0;
    line-height: 18px;
    color: #444;
}

.sheet-tab.active {
    align-self: flex-start;
    height: 23px;
    padding: 0 8px;
    background: #fff;
    border-bottom: 2px solid #1e6b41;
    color: #1e6b41;
    font-weight: 700;
}

.add {
    margin-left: 32px;
}

.sheet-tabs .dots {
    margin: 0 11px 0 auto;
}

.hscroll {
    width: 478px;
}

/* Status bar */
.status {
    display: flex;
    align-items: center;
    height: 25px;
    flex: none;
    padding: 0 9px;
    font-size: 12px;
    color: #666;
}

.views {
    display: flex;
    gap: 30px;
    margin: 0 22px 0 auto;
    color: #999;
}

.zoom {
    display: flex;
    align-items: center;
    gap: 6px;
    color: #aaa;
}

.zoom input {
    appearance: none;
    width: 116px;
    height: 10px;
    background: linear-gradient(#aaa, #aaa) center / 100% 1px no-repeat;
}

.zoom input::-webkit-slider-thumb {
    appearance: none;
    width: 2px;
    height: 8px;
    background: #999;
}

.zoom span {
    margin-left: 10px;
}
```
